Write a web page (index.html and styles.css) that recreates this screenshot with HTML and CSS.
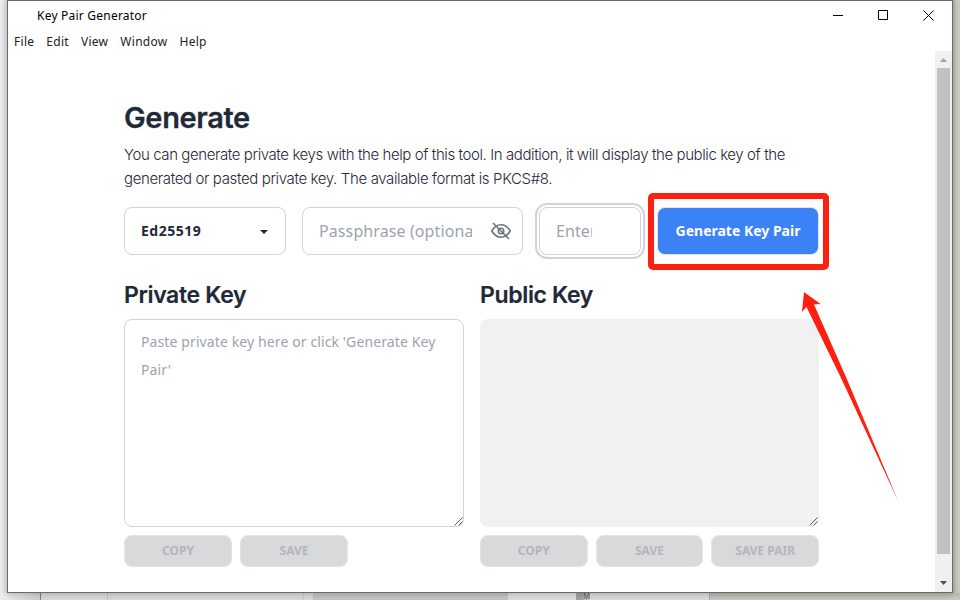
FILE: index.html
```html
<!DOCTYPE html>
<html lang="en">
<head>
<meta charset="utf-8">
<title>Key Pair Generator</title>
<link rel="stylesheet" href="styles.css">
</head>
<body>
<div class="desk-bottom"><i class="d1"></i><i class="d2"></i><i class="d3"></i><i class="d4"></i><i class="d5"></i><i class="d6">M</i><i class="d7"></i><i class="d8"></i></div>
<div class="window">
  <header class="titlebar">
    <span class="app-name">Key Pair Generator</span>
    <div class="controls">
      <svg width="11" height="11" viewBox="0 0 11 11"><path d="M0 5.5H10" /></svg>
      <svg width="11" height="11" viewBox="0 0 11 11"><path d="M.5 .5H9.5V9.5H.5Z"/></svg>
      <svg class="close" width="11" height="11" viewBox="0 0 11 11"><path d="M.4 .4L10.6 10.6M10.6 .4L.4 10.6"/></svg>
    </div>
  </header>
  <nav class="menu"><span>File</span><span>Edit</span><span>View</span><span>Window</span><span>Help</span></nav>
  <div class="viewport">
    <main class="content">
      <h1>Generate</h1>
      <p><span class="l1">You can generate private keys with the help of this tool. In addition, it will display the public key of the</span><br><span class="l2">generated or pasted private key. The available format is PKCS#8.</span></p>
      <div class="options">
        <div class="field select"><span>Ed25519</span><svg width="8" height="4" viewBox="0 0 8 4"><path d="M0 0H8L4 4Z"/></svg></div>
        <div class="field pass"><span class="clip">Passphrase (optional)</span>
          <svg width="20" height="18" viewBox="0 0 20 18"><path d="M.8 9C3 5.200 6.200 2.800 10 2.800S17 5.200 19.200 9C17 12.800 13.800 15.200 10 15.200S3 12.800 .8 9Z"/><circle cx="10" cy="9" r="2.700"/><path d="M2 1L18 17M8.500 7.500L11.500 10.500"/></svg>
        </div>
        <div class="field enter"><span class="clip">Enter</span></div>
        <div class="generate">Generate Key Pair</div>
      </div>
      <div class="keys">
        <section>
          <h2 class="private">Private Key</h2>
          <div class="area">Paste private key here or click 'Generate Key<br>Pair'<svg class="grip" width="9" height="9" viewBox="0 0 9 9"><path d="M.5 8.500L8.500 .5M4.500 8.500L8.500 4.500"/></svg></div>
          <div class="actions"><div class="btn">COPY</div><div class="btn">SAVE</div></div>
        </section>
        <section>
          <h2 class="public">Public Key</h2>
          <div class="area readonly"><svg class="grip" width="9" height="9" viewBox="0 0 9 9"><path d="M.5 8.500L8.500 .5M4.500 8.500L8.500 4.500"/></svg></div>
          <div class="actions"><div class="btn">COPY</div><div class="btn">SAVE</div><div class="btn">SAVE PAIR</div></div>
        </section>
      </div>
    </main>
    <div class="scrollbar">
      <svg width="17" height="17" viewBox="0 0 17 17"><path fill="#a3a3a3" d="M5 11L8.500 7L12 11Z"/></svg>
      <div class="thumb"></div>
      <svg class="down" width="17" height="17" viewBox="0 0 17 17"><path fill="#505050" d="M5 6L8.500 10L12 6Z"/></svg>
    </div>
  </div>
</div>
<div class="highlight"></div>
<svg class="arrow" width="100" height="214" viewBox="800 290 100 214"><defs><linearGradient id="fade" gradientUnits="userSpaceOnUse" x1="804" y1="292" x2="898" y2="501"><stop offset=".9" stop-color="#ff1f10"/><stop offset="1" stop-color="#ff1f10" stop-opacity=".6"/></linearGradient></defs><path fill="url(#fade)" d="M804 292L820.500 304L814 304.500L846 377L899 503L841.500 379L806.500 307L802 312Z"/></svg>
</body>
</html>
```
FILE: styles.css
```css
* { box-sizing: border-box; }
body {
  margin: 0;
  width: 960px;
  height: 600px;
  overflow: hidden;
  position: relative;
  font-family: "Noto Sans", "Open Sans", sans-serif;
  color: #1f2937;
  background: linear-gradient(90deg, #efefef 0, #dedede 7px, #dedede 900px, #a9aea8 952px, #c3c8c1 956px, #c9cdc6 960px);
}
.desk-bottom {
  position: absolute;
  left: 0;
  top: 593px;
  width: 960px;
  height: 7px;
  display: grid;
  grid-template-columns: 41px 67px 196px 9px 195px 68px 21px 113px 250px;
}
.desk-bottom i { background: #d9d9d9; }
.desk-bottom .d1 { background: linear-gradient(90deg, #eee, #cecece); border-right: 1px solid #808080; }
.desk-bottom .d2 { border-right: 1px solid #c2c2c2; }
.desk-bottom .d3 { border-right: 1px solid #c9c9c9; }
.desk-bottom .d5 { background: #c4c4c4; }
.desk-bottom .d6 {
  grid-column: 7;
  grid-row: 1;
  padding-left: 7px;
  background: linear-gradient(90deg, #a2a2a2 7px, #bdbdbd 7px, #bdbdbd 13px, #d9d9d9 13px);
  color: #555;
  font: 8px/6px "Noto Sans", sans-serif;
}
.desk-bottom .d7 { grid-column: 8; grid-row: 1; border-right: 1px solid #aaa; }
.desk-bottom .d8 { grid-column: 9; grid-row: 1; background: linear-gradient(#b3b8b0, #c7ccc3); }
.window {
  position: relative;
  margin-left: 7px;
  width: 946px;
  height: 593px;
  border: 1px solid #6a6a6a;
  background: #fff;
  box-shadow: 0 1px 7px rgba(0, 0, 0, .22);
}
.titlebar {
  height: 28px;
  display: flex;
  justify-content: space-between;
  padding: 0 18px 0 29px;
  color: #000;
  font-size: 12px;
  line-height: 29px;
}
.app-name { letter-spacing: .22px; }
.controls { display: flex; gap: 34px; padding-top: 9px; }
.controls svg { fill: none; stroke: #000; stroke-width: 1; }
.menu {
  height: 22px;
  display: flex;
  gap: 12px;
  padding-left: 6px;
  font-size: 12px;
  line-height: 25px;
  letter-spacing: .28px;
  color: #222;
}
.viewport { height: 541px; display: flex; justify-content: space-between; }
.content { padding: 49px 0 0 116px; width: 811px; }
h1, h2, p { margin: 0; font-family: Inter, sans-serif; white-space: nowrap; }
h1 { font-size: 29px; line-height: 36px; font-weight: 600; letter-spacing: -.36px; -webkit-text-stroke: .3px #1f2937; }
p { margin-top: 7px; font-size: 15px; line-height: 24px; font-weight: 300; }
.l1 { letter-spacing: -.405px; }
.l2 { letter-spacing: -.37px; }
.options { display: grid; grid-template-columns: 162px 221px 102px 162px; gap: 16px; margin-top: 16px; height: 48px; }
.field {
  border: 1px solid #d2d3d6;
  border-radius: 8px;
  display: flex;
  align-items: center;
  justify-content: space-between;
  padding-left: 16px;
  white-space: nowrap;
}
.select { font-size: 14px; font-weight: 700; padding-right: 17px; letter-spacing: .5px; }
.select span { margin-top: -2px; }
.select svg { fill: #1f2937; margin-top: 2px; }
.pass { padding-right: 11px; }
.pass svg { fill: none; stroke: #6b7280; stroke-width: 1.6; }
.clip { color: #9ca3af; font-size: 16px; overflow: hidden; width: 153px; letter-spacing: .1px; }
.enter { outline: 2px solid #d2d3d6; outline-offset: 2px; }
.enter .clip { width: 36px; }
.generate {
  background: #3b82f6;
  border: 1px solid #dfe5f0;
  border-radius: 8px;
  color: #fff;
  font-size: 14px;
  font-weight: 700;
  line-height: 46px;
  text-align: center;
  white-space: nowrap;
}
.keys { display: grid; grid-template-columns: 340px 339px; gap: 16px; margin-top: 24px; }
h2 { font-size: 23px; line-height: 32px; font-weight: 600; letter-spacing: -.35px; -webkit-text-stroke: .2px #1f2937; }
.area {
  position: relative;
  margin-top: 8px;
  height: 208px;
  border: 1px solid #d2d3d6;
  border-radius: 8px;
  padding: 8px 16px;
  font-size: 14px;
  line-height: 28px;
  letter-spacing: .11px;
  color: #9ca3af;
  white-space: nowrap;
}
.readonly { background: #f1f1f1; border-color: #f1f1f1; }
.grip { position: absolute; right: 0; bottom: 0; fill: none; stroke: #444; stroke-width: .9; }
.actions { display: grid; grid-template-columns: repeat(3, 1fr); gap: 8px; margin-top: 8px; }
.btn {
  height: 32px;
  border: 1px solid #e3e4e6;
  border-radius: 8px;
  background: #d8d9db;
  color: #b3b6bb;
  font-size: 12px;
  font-weight: 700;
  line-height: 30px;
  text-align: center;
}
.scrollbar { width: 17px; background: #f0f0f0; display: flex; flex-direction: column; align-items: center; }
.thumb { width: 13px; height: 486px; background: #c1c1c1; }
.down { margin-top: auto; }
.highlight { position: absolute; left: 648px; top: 193px; width: 181px; height: 77px; border: 6px solid #ff1f10; border-radius: 5px; }
.arrow { position: absolute; left: 800px; top: 290px; }
```
